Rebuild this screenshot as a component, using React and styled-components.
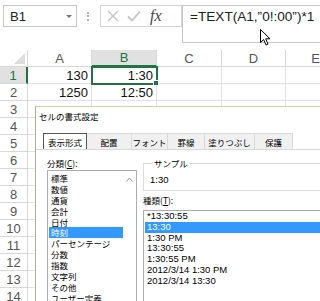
import styled, { createGlobalStyle } from 'styled-components'

const GlobalStyle = createGlobalStyle`
  html, body {
    margin: 0;
    padding: 0;
  }
  body {
    width: 320px;
    height: 301px;
    overflow: hidden;
    background: #fff;
    font-family: "Liberation Sans", "Noto Sans CJK JP", sans-serif;
  }
`

const Screen = styled.div`
  position: relative;
  width: 320px;
  height: 301px;
  overflow: hidden;
  background: #fff;
`

const FormulaBar = styled.div`
  display: flex;
  align-items: flex-start;
  height: 50px;
  padding: 5px 0 0 3px;
  box-sizing: border-box;
`

const NameBox = styled.div`
  display: flex;
  align-items: center;
  justify-content: space-between;
  width: 74px;
  height: 22px;
  padding: 0 4px 0 6px;
  box-sizing: border-box;
  border: 1px solid #c6c6c6;
  font-size: 13px;
  color: #222;
`

const Caret = styled.span`
  width: 0;
  height: 0;
  border-left: 3px solid transparent;
  border-right: 3px solid transparent;
  border-top: 3px solid #777;
`

const Grip = styled.div`
  width: 0;
  height: 9px;
  margin: 7px 11px 0 10px;
  border-left: 2px dotted #b0b0b0;
`

const ButtonBox = styled.div`
  display: flex;
  align-items: center;
  gap: 8px;
  width: 82px;
  height: 22px;
  padding-left: 6px;
  box-sizing: border-box;
  border: 1px solid #d4d4d4;
`

const Fx = styled.span`
  font-family: "Liberation Serif", serif;
  font-style: italic;
  font-size: 16px;
  color: #444;
  margin-left: 1px;
`

const FormulaInput = styled.div`
  flex: 1;
  height: 38px;
  padding: 3px 0 0 7px;
  box-sizing: border-box;
  border: 1px solid #c6c6c6;
  border-right: none;
  font-size: 13.6px;
  color: #222;
  white-space: nowrap;
`

const Sheet = styled.div`
  display: grid;
  grid-template-columns: 28px 64px 65px 65px 64px 60px;
  grid-auto-rows: 17px;
`

const HeadCell = styled.div`
  display: flex;
  align-items: center;
  justify-content: center;
  box-sizing: border-box;
  border-right: 1px solid #d8d8d8;
  border-bottom: 1px solid #d8d8d8;
  font-size: 13px;
  color: ${p => (p.$active ? '#217346' : '#555')};
  background: ${p => (p.$active ? '#e1e1e1' : '#fff')};
  ${p => p.$active === 'col' && 'border-bottom: 2px solid #217346;'}
  ${p => p.$active === 'row' && 'border-right: 2px solid #217346;'}
`

const Corner = styled.div`
  display: flex;
  align-items: flex-end;
  justify-content: flex-end;
  padding: 0 2px 2px 0;
  box-sizing: border-box;
  border-right: 1px solid #d8d8d8;
  border-bottom: 1px solid #d8d8d8;

  &::after {
    content: '';
    border-left: 11px solid transparent;
    border-bottom: 11px solid #dcdcdc;
  }
`

const Cell = styled.div`
  position: relative;
  display: flex;
  align-items: center;
  justify-content: flex-end;
  padding-right: 3px;
  box-sizing: border-box;
  border-right: 1px solid #e1e1e1;
  border-bottom: 1px solid #e1e1e1;
  font-size: 13px;
  color: #111;

  ${p =>
    p.$selected &&
    `
    outline: 2px solid #217346;
    outline-offset: -1px;
    z-index: 1;
    &::after {
      content: '';
      position: absolute;
      right: -3px;
      bottom: -3px;
      width: 4px;
      height: 4px;
      background: #217346;
      border: 1px solid #fff;
    }
  `}
`

const Dialog = styled.div`
  position: absolute;
  left: 35px;
  top: 106px;
  width: 300px;
  height: 210px;
  box-sizing: border-box;
  background: #fff;
  border: 1px solid #c9d3a3;
  border-left-color: #a9b39a;
  font-family: "Noto Sans CJK JP", sans-serif;
  font-size: 8.5px;
  color: #000;
`

const TitleBar = styled.div`
  display: flex;
  align-items: center;
  height: 18px;
  padding-left: 3px;
`

const TabStrip = styled.div`
  display: flex;
  margin-top: 8px;
  padding-left: 7px;
  border-bottom: 1px solid #d9d9d9;
`

const Tab = styled.div`
  display: flex;
  align-items: center;
  justify-content: center;
  width: ${p => p.$w}px;
  height: 16px;
  box-sizing: border-box;
  background: ${p => (p.$active ? '#fff' : '#f0f0f0')};
  border: 1px solid ${p => (p.$active ? '#555' : '#d9d9d9')};
  border-left: ${p => (p.$active ? '1px solid #555' : 'none')};
  border-bottom: none;
`

const Panel = styled.div`
  display: grid;
  grid-template-columns: 90px 1fr;
  gap: 6px;
  padding: 8px 0 0 11px;
`

const Column = styled.div`
  display: flex;
  flex-direction: column;
`

const Label = styled.div`
  height: 11px;
  line-height: 11px;
  margin-top: ${p => p.$top || 0}px;
  span {
    text-decoration: underline;
  }
`

const ListBox = styled.div`
  display: flex;
  margin-top: ${p => p.$gap}px;
  height: 200px;
  border: 1px solid #abadb3;
  padding-top: ${p => p.$pad}px;
  box-sizing: border-box;
`

const Items = styled.div`
  flex: 1;
  padding-left: 1px;
`

const Item = styled.div`
  height: ${p => p.$h}px;
  line-height: ${p => p.$h}px;
  padding-left: 2px;
  white-space: nowrap;
  font-family: ${p => (p.$latin ? '"Liberation Sans", sans-serif' : 'inherit')};
  font-size: ${p => (p.$latin ? '9.5px' : 'inherit')};
  background: ${p => (p.$selected ? '#3399ff' : 'transparent')};
  color: ${p => (p.$selected ? '#fff' : '#000')};
`

const ScrollBar = styled.div`
  width: 13px;
  display: flex;
  justify-content: center;
  padding-top: 4px;
  box-sizing: border-box;
`

const GroupBox = styled.fieldset`
  margin: 0;
  padding: 5px 0 4px 6px;
  border: 1px solid #dcdcdc;
  border-right: none;
  min-width: 0;

  legend {
    padding: 0 1px;
    margin-left: 3px;
    line-height: 11px;
  }
`

const Sample = styled.div`
  font-family: "Liberation Sans", sans-serif;
  font-size: 9.5px;
  height: 12px;
  line-height: 12px;
`

const Pointer = styled.svg`
  position: absolute;
  left: 260px;
  top: 29px;
`

const columns = ['A', 'B', 'C', 'D', 'E']
const rows = Array.from({ length: 14 }, (_, i) => i + 1)
const values = { 1: ['130', '1:30'], 2: ['1250', '12:50'] }

const categories = [
  '標準', '数値', '通貨', '会計', '日付', '時刻',
  'パーセンテージ', '分数', '指数', '文字列', 'その他', 'ユーザー定義',
]

const types = [
  '*13:30:55', '13:30', '1:30 PM', '13:30:55',
  '1:30:55 PM', '2012/3/14 1:30 PM', '2012/3/14 13:30',
]

const tabs = [
  ['表示形式', 44], ['配置', 45], ['フォント', 36],
  ['罫線', 37], ['塗りつぶし', 50], ['保護', 38],
]

export default function App() {
  return (
    <Screen>
      <GlobalStyle />
      <FormulaBar>
        <NameBox>
          B1
          <Caret />
        </NameBox>
        <Grip />
        <ButtonBox>
          <svg width="12" height="12" viewBox="0 0 12 12">
            <path d="M1 1 L11 11 M11 1 L1 11" stroke="#c4c4c4" strokeWidth="1.4" fill="none" />
          </svg>
          <svg width="14" height="12" viewBox="0 0 14 12">
            <path d="M1 6.5 L5 10.5 L13 1.5" stroke="#c4c4c4" strokeWidth="1.8" fill="none" />
          </svg>
          <Fx>fx</Fx>
        </ButtonBox>
        <FormulaInput>=TEXT(A1,”0!:00”)*1</FormulaInput>
      </FormulaBar>

      <Sheet>
        <Corner />
        {columns.map(c => (
          <HeadCell key={c} $active={c === 'B' ? 'col' : undefined}>{c}</HeadCell>
        ))}
        {rows.map(r => [
          <HeadCell key={`h${r}`} $active={r === 1 ? 'row' : undefined}>{r}</HeadCell>,
          ...columns.map((c, i) => (
            <Cell key={`${c}${r}`} $selected={r === 1 && c === 'B'}>
              {values[r] ? values[r][i] : ''}
            </Cell>
          )),
        ])}
      </Sheet>

      <Pointer width="11" height="17" viewBox="0 0 11 17">
        <path d="M0.5 0.5 L0.5 13.5 L3.6 10.6 L6 16 L8 15.1 L5.7 9.8 L10 9.8 Z" fill="#fff" stroke="#000" strokeWidth="1" />
      </Pointer>

      <Dialog>
        <TitleBar>セルの書式設定</TitleBar>
        <TabStrip>
          {tabs.map(([t, w], i) => (
            <Tab key={t} $w={w} $active={i === 0}>{t}</Tab>
          ))}
        </TabStrip>
        <Panel>
          <Column>
            <Label>分類(<span>C</span>):</Label>
            <ListBox $gap={1} $pad={2}>
              <Items>
                {categories.map(c => (
                  <Item key={c} $h={10.9} $selected={c === '時刻'}>{c}</Item>
                ))}
              </Items>
              <ScrollBar>
                <svg width="7" height="5" viewBox="0 0 7 5">
                  <path d="M0.5 4.5 L3.5 1 L6.5 4.5" stroke="#999" fill="none" />
                </svg>
              </ScrollBar>
            </ListBox>
          </Column>
          <Column>
            <GroupBox>
              <legend>サンプル</legend>
              <Sample>1:30</Sample>
            </GroupBox>
            <Label $top={4}>種類(<span>T</span>):</Label>
            <ListBox $gap={4} $pad={0}>
              <Items>
                {types.map((t, i) => (
                  <Item key={t + i} $h={10.8} $latin $selected={i === 1}>{t}</Item>
                ))}
              </Items>
            </ListBox>
          </Column>
        </Panel>
      </Dialog>
    </Screen>
  )
}
